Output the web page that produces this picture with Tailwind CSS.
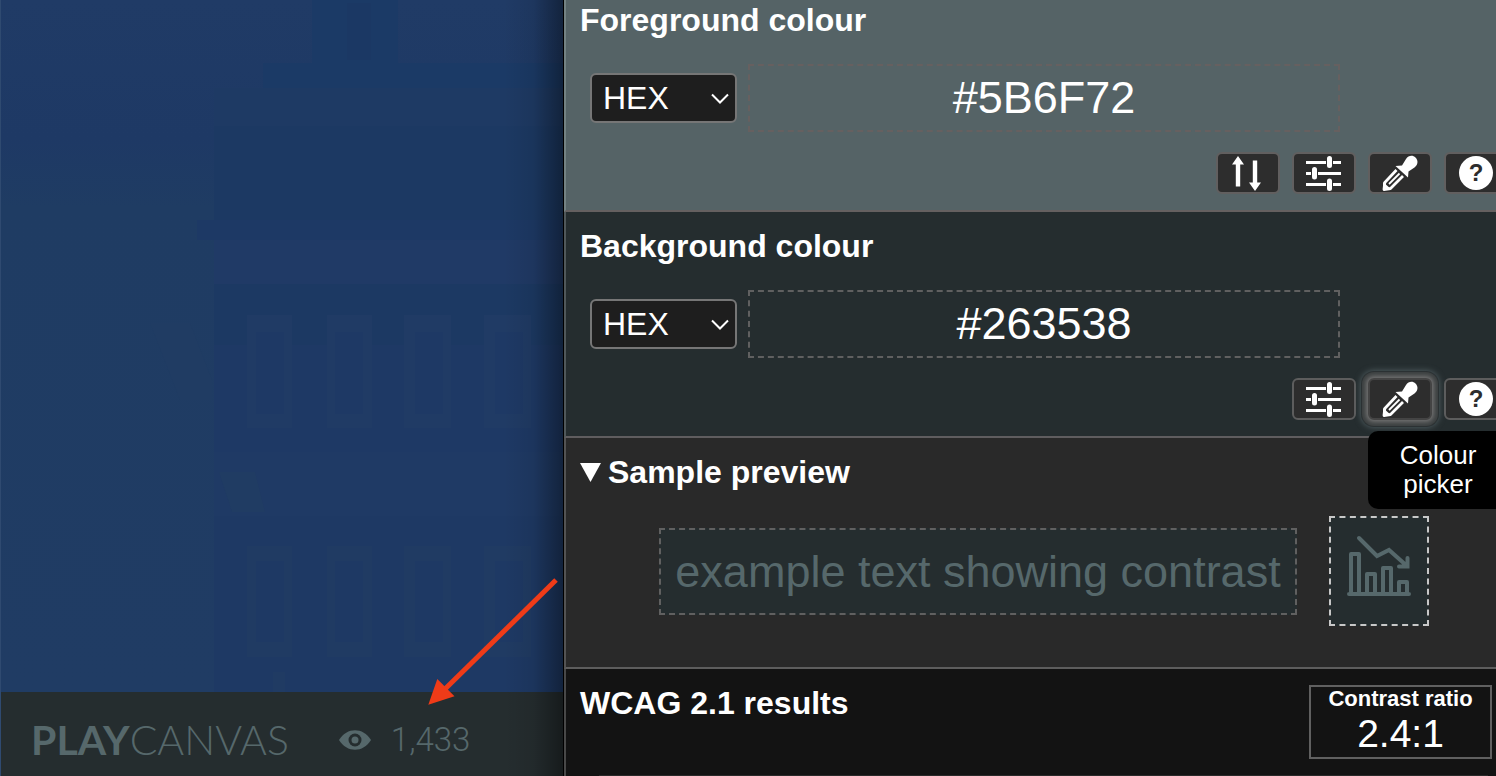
<!DOCTYPE html>
<html lang="en">
<head>
<meta charset="utf-8">
<title>Colour contrast analyser</title>
<script src="https://cdn.jsdelivr.net/npm/@tailwindcss/browser@4"></script>
</head>
<body class="bg-[#131313] font-['Liberation_Sans',Arial,sans-serif] text-white">
<svg class="hidden" aria-hidden="true">
  <symbol id="sliders" viewBox="0 0 36 36">
    <g fill="none" stroke="#fff" stroke-width="3">
      <path d="M0 7.500H20M27 7.500H35M0 18.500H5M12 18.500H35M0 29.500H20M27 29.500H35"/>
      <path stroke-width="5" stroke-linecap="round" d="M23.500 3.500V10.500M8.500 14.500V22M23.500 26V33.500"/>
    </g>
  </symbol>
  <symbol id="dropper" viewBox="0 0 36 36">
    <path fill="#fff" d="M13.500 11 20 10.500 24 4C26.500 0 31 0 33.500 2.500 36.500 5.500 36 10 32.500 12.500L26.500 16.500 26 22.500Z"/>
    <path fill="none" stroke="#fff" stroke-width="2.800" stroke-linejoin="round" d="M14.500 15 2.800 27.500 2 34.500 8.500 33.500 21 21"/>
    <path fill="none" stroke="#fff" stroke-width="1.800" d="M17.500 18.500 7 29"/>
    <path fill="#fff" d="M1 35.500V27L9 34Z"/>
  </symbol>
  <symbol id="chevron" viewBox="0 0 20 12">
    <path fill="none" stroke="#fff" stroke-width="2" d="M2 1.500 10 9.500 18 1.500"/>
  </symbol>
</svg>
<main class="grid min-h-screen grid-cols-[564fr_932fr] overflow-hidden">
  <section aria-label="PlayCanvas scene" class="relative flex flex-col border-l border-[#2f4a70] bg-[#1f3b62]">
    <div class="relative flex-1">
      <svg class="absolute inset-0 size-full" viewBox="1 0 563 692" preserveAspectRatio="none" aria-hidden="true">
        <defs>
          <linearGradient id="sky" x1="0" y1="0" x2="0" y2="1"><stop offset="0" stop-color="#203b66"/><stop offset=".2" stop-color="#1e3965"/><stop offset=".3" stop-color="#1f3c63"/><stop offset="1" stop-color="#203c64"/></linearGradient>
        </defs>
        <path fill="url(#sky)" d="M0 0H564V692H0Z"/>
        <path fill="#1b3a66" d="M312 0H398V63H564V88H263V63H312Z"/>
        <path fill="#1b3864" d="M347 3H371V60H347Z"/>
        <path fill="#1e3a64" d="M214 88H564V126H214Z"/>
        <path fill="#1c3963" d="M214 126H564V220H214Z"/>
        <path fill="#1d3965" d="M197 220H564V240H197Z"/>
        <path fill="#203a66" d="M214 240H564V284H214Z"/>
        <path fill="#1c3963" d="M214 284H564V345H214Z"/>
        <path fill="#1e3965" d="M214 345H564V452H214Z"/>
        <path fill="#1f3a65" d="M214 452H564V516H214Z"/>
        <path fill="#1e3964" d="M214 516H564V692H214Z"/>
        <path fill="#203c63" d="M150 323H190L212 380V400H180ZM219 472H255L265 512H232Z"/>
        <path fill="#203b65" d="M247 315H292V428H247ZM327 315H372V428H327ZM404 315H451V428H404ZM484 315H531V428H484Z"/>
        <path fill="#1e3965" d="M256 332H284V414H256ZM335 332H363V414H335ZM415 332H443V414H415ZM495 332H523V414H495Z"/>
        <path fill="#203b63" d="M247 546H292V657H247ZM327 546H372V657H327ZM404 546H451V657H404ZM484 546H531V657H484ZM273 672H285V692H273Z"/>
        <path fill="#1e3964" d="M256 561H284V642H256ZM335 561H363V642H335ZM415 561H443V642H415ZM495 561H523V642H495Z"/>
      </svg>
    </div>
    <footer class="flex h-21 items-center bg-[#252d2f] pt-3 pl-[30px] text-[#56686b]">
      <a href="#" class="font-['Lato',sans-serif] text-[41px] leading-10"><span class="font-bold">PLAY</span><span class="font-light">CANVAS</span></a>
      <svg class="ml-[50px] h-5 w-8" viewBox="0 0 32 20" aria-hidden="true"><path fill="#56686b" d="M0 10C8-3 24-3 32 10 24 23 8 23 0 10Z"/><circle cx="16" cy="10" r="6.500" fill="#252d2f"/><circle cx="16" cy="10" r="3.500" fill="#56686b"/></svg>
      <span class="ml-5 font-['Roboto',sans-serif] text-[33px] leading-10 font-light">1,433</span>
    </footer>
    <div class="pointer-events-none absolute inset-y-0 right-0 w-15 border-r border-black bg-linear-to-r from-transparent via-black/8 to-black/40"></div>
    <svg class="pointer-events-none absolute right-0 bottom-[68px] h-[132px] w-[140px]" viewBox="424 576 140 132" aria-hidden="true">
      <path stroke="#ef3b18" stroke-width="5" d="M556 580 444 690"/><path fill="#ef3b18" d="M428.300 704.700 437.300 679 454.500 696.300Z"/>
    </svg>
  </section>

  <div class="-mt-3.5 flex min-w-0 flex-col overflow-hidden">
    <section class="border-b-2 border-b-[#656060] border-l-2 border-l-[#738283] bg-[#556366] px-[14px] py-4">
      <h2 class="text-[32px] leading-9 font-bold">Foreground colour</h2>
      <div class="mt-[26px] flex items-center gap-[11px] pr-[142px] pl-[10px]">
        <div class="relative">
          <select aria-label="Foreground format" class="block h-[50px] w-[147px] appearance-none rounded-md border-2 border-[#767676] bg-[#1e1e1e] pl-[11px] text-[32px] leading-9"><option>HEX</option></select>
          <svg class="pointer-events-none absolute top-5 right-[7px] h-3 w-5"><use href="#chevron"/></svg>
        </div>
        <input aria-label="Foreground colour" value="#5B6F72" class="h-[68px] min-w-0 flex-1 border-2 border-dashed border-[#666060] bg-transparent text-center text-[45px]">
      </div>
      <div class="-mr-[26px] mt-5 flex justify-end gap-3">
        <button aria-label="Swap colours" class="flex h-[42px] w-16 items-center justify-center rounded-md border-2 border-[#615f5f] bg-[#2d2d2d]"><svg class="size-9" viewBox="0 0 36 36"><path fill="#fff" d="M8 1 14 9.500H10.200V31.500H5.800V9.500H2ZM25 36 19 27.500H22.800V5.500H27.200V27.500H31Z"/></svg></button>
        <button aria-label="Foreground sliders" class="flex h-[42px] w-16 items-center justify-center rounded-md border-2 border-[#615f5f] bg-[#2d2d2d]"><svg class="size-9"><use href="#sliders"/></svg></button>
        <button aria-label="Foreground colour picker" class="flex h-[42px] w-16 items-center justify-center rounded-md border-2 border-[#615f5f] bg-[#2d2d2d]"><svg class="size-9"><use href="#dropper"/></svg></button>
        <button aria-label="Foreground help" class="flex h-[42px] w-16 items-center justify-center rounded-md border-2 border-[#615f5f] bg-[#2d2d2d]"><span class="size-[34px] rounded-full bg-white text-2xl leading-[34px] font-bold text-[#2d2d2d]">?</span></button>
      </div>
    </section>

    <section class="border-b-2 border-b-[#5f5d5f] border-l-2 border-l-[#50585a] bg-[#252d2f] px-[14px] py-4">
      <h2 class="text-[32px] leading-9 font-bold">Background colour</h2>
      <div class="mt-[26px] flex items-center gap-[11px] pr-[142px] pl-[10px]">
        <div class="relative">
          <select aria-label="Background format" class="block h-[50px] w-[147px] appearance-none rounded-md border-2 border-[#767676] bg-[#1e1e1e] pl-[11px] text-[32px] leading-9"><option>HEX</option></select>
          <svg class="pointer-events-none absolute top-5 right-[7px] h-3 w-5"><use href="#chevron"/></svg>
        </div>
        <input aria-label="Background colour" value="#263538" class="h-[68px] min-w-0 flex-1 border-2 border-dashed border-[#606060] bg-transparent text-center text-[45px]">
      </div>
      <div class="-mr-[26px] mt-5 flex justify-end gap-3">
        <button aria-label="Background sliders" class="flex h-[42px] w-16 items-center justify-center rounded-md border-2 border-[#5d5d5d] bg-[#2d2d2d]"><svg class="size-9"><use href="#sliders"/></svg></button>
        <div class="relative">
          <button aria-describedby="tip" aria-label="Background colour picker" class="flex h-[42px] w-16 items-center justify-center rounded-md border-2 border-[#444444] bg-[#2d2d2d] shadow-[0_0_4px_2px_#727272,0_0_0_6px_#3c4041,0_0_0_7px_#2b3133,0_0_6px_7px_#566468]"><svg class="size-9"><use href="#dropper"/></svg></button>
          <div id="tip" role="tooltip" class="absolute top-[53px] left-0 z-10 w-[140px] rounded-[10px] bg-black px-5 py-[10px] text-center text-[26px] leading-[29px]">Colour picker</div>
        </div>
        <button aria-label="Background help" class="flex h-[42px] w-16 items-center justify-center rounded-md border-2 border-[#5d5d5d] bg-[#2d2d2d]"><span class="size-[34px] rounded-full bg-white text-2xl leading-[34px] font-bold text-[#2d2d2d]">?</span></button>
      </div>
    </section>

    <details open class="border-b-2 border-b-[#5d5d5d] border-l-2 border-l-[#535353] bg-[#292929] px-[14px] pt-4 pb-[41px]">
      <summary class="flex items-center gap-[7px] text-[32px] leading-9 font-bold"><svg class="h-[19px] w-[21px]" viewBox="0 0 21 19" aria-hidden="true"><path fill="#fff" d="M0 0H21L10.500 19Z"/></svg>Sample preview</summary>
      <div class="mt-[26px] flex items-center justify-center gap-8 pl-[26px]">
        <p class="flex h-[87px] items-center border-2 border-dashed border-[#606060] bg-[#252d2f] px-[14px] text-[45px] leading-none whitespace-nowrap text-[#56686b]">example text showing contrast</p>
        <div class="flex h-[110px] w-[100px] items-center justify-center border-2 border-dashed border-[#c8c8c8] bg-[#252d2f]">
          <svg class="h-[72px] w-16" viewBox="0 0 64 72" fill="none" stroke="#56686b" stroke-width="4" stroke-linecap="round" stroke-linejoin="round" role="img" aria-label="Falling chart"><path d="M2 59H62M4 59V19H12V59M20 59V39H28V59M36 59V33H44V59M52 59V47H60V59"/><path d="M12 3 30 21 42 15 60 31M60.500 23V31.500H52" stroke-linejoin="miter"/></svg>
        </div>
      </div>
    </details>

    <section class="flex flex-1 flex-col justify-between border-l-2 border-l-[#484848] bg-[#131313] pt-4">
      <div class="flex items-start justify-between pr-1 pl-[14px]">
        <h2 class="text-[32px] leading-9 font-bold">WCAG 2.1 results</h2>
        <div class="w-[183px] border-2 border-[#606060] text-center">
          <h3 class="text-[22px] leading-6 font-bold">Contrast ratio</h3>
          <p class="text-[39px] leading-[46px]">2.4:1</p>
        </div>
      </div>
      <hr class="mr-2 ml-[33px] border-t border-[#2a2a2a]">
    </section>
  </div>
</main>
</body>
</html>
